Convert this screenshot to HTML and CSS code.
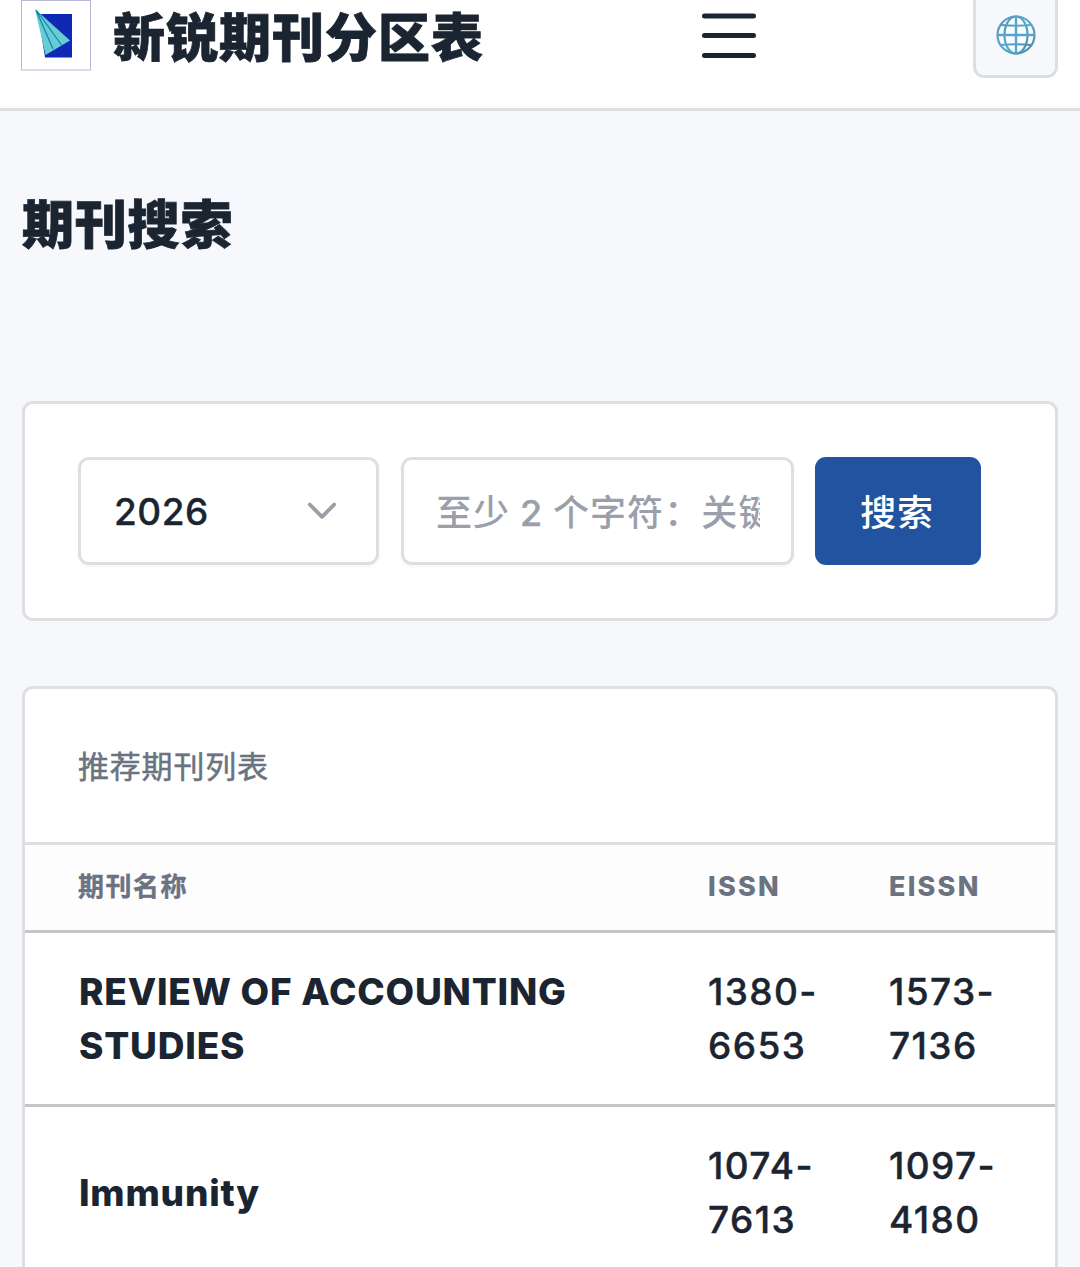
FILE: index.html
```html
<!DOCTYPE html>
<html lang="zh-CN">
<head>
<meta charset="utf-8">
<title>新锐期刊分区表</title>
<link rel="stylesheet" href="styles.css">
</head>
<body>
<header class="topbar">
  <a class="brand">
    <svg class="logo" viewBox="0 0 70 71">
      <rect x=".5" y=".5" width="69" height="69.5" fill="#fff" stroke="#b6bad4"/>
      <path d="M17 14H51V57.500H24z" fill="#1029b4"/>
      <path d="M14 9L49 40.500L24.500 55z" fill="#66cdd5"/>
      <path d="M15 10L32 49M16 11L40.500 45" stroke="#167fa6" stroke-width="1.200" fill="none"/>
    </svg>
    <span class="site-name">新锐期刊分区表</span>
  </a>
  <svg class="menu" viewBox="0 0 54 50"><path d="M2.500 4.900H51.500M2.500 24.600H51.500M2.500 44.400H51.500" stroke="#1b2431" stroke-width="5" stroke-linecap="round"/></svg>
  <button class="lang" aria-label="语言">
    <svg class="globe" viewBox="0 0 40 40">
      <defs><linearGradient id="g" x1="0" y1="0" x2="1" y2="1"><stop offset="0" stop-color="#5798b4"/><stop offset=".5" stop-color="#58a9d2"/><stop offset="1" stop-color="#508ba6"/></linearGradient></defs>
      <circle cx="20" cy="20" r="18.500" fill="#fbfdff"/>
      <g fill="none" stroke="url(#g)" stroke-width="2.200">
        <circle cx="20" cy="20" r="18.500"/>
        <ellipse cx="20" cy="20" rx="11.500" ry="18.500"/>
        <path d="M5 10Q20 11.500 35 10M5 30Q20 28.500 35 30"/>
      </g>
      <path d="M20 1.500V38.500M1.500 20H38.500" stroke="#56a5cc" stroke-width="2.400"/>
    </svg>
  </button>
</header>
<main class="content">
  <h1 class="page-title">期刊搜索</h1>
  <form class="card search">
    <div class="field select"><span>2026</span>
      <svg class="chevron" viewBox="0 0 30 18"><path d="M2.800 2.500L15 14.800L27.200 2.500" fill="none" stroke="#9a9ea6" stroke-width="3.800" stroke-linecap="round" stroke-linejoin="round"/></svg>
    </div>
    <div class="field query"><span class="placeholder">至少 <b>2</b> 个字符：关键</span></div>
    <button class="submit" type="button">搜索</button>
  </form>
  <section class="card results">
    <div class="list-title">推荐期刊列表</div>
    <div class="row head"><span>期刊名称</span><span class="latin">ISSN</span><span class="latin">EISSN</span></div>
    <div class="row"><strong>REVIEW OF ACCOUNTING<br>STUDIES</strong><span>1380-<br>6653</span><span>1573-<br>7136</span></div>
    <div class="row"><strong>Immunity</strong><span>1074-<br>7613</span><span>1097-<br>4180</span></div>
  </section>
</main>
</body>
</html>
```

FILE: styles.css
```css
* { box-sizing: border-box; }
html, body { height: 1267px; overflow: hidden; }
body {
  margin: 0;
  background: #f6f8fc;
  color: #1b2431;
  font-family: Inter, "Noto Sans CJK SC", sans-serif;
  font-size: 37px;
  font-weight: 500;
}
button { font: inherit; padding: 0; }
.topbar {
  display: flex;
  align-items: flex-start;
  height: 111px;
  padding: 0 22px 0 21px;
  background: #fff;
  border-bottom: 3px solid #dddfe1;
}
.brand { display: flex; gap: 22px; width: 681px; }
.logo { width: 70px; height: 71px; flex: none; }
.site-name {
  font-size: 52px;
  font-weight: 800;
  line-height: 77px;
  letter-spacing: 1px;
  white-space: nowrap;
  -webkit-text-stroke: .8px;
}
.menu { width: 54px; height: 50px; margin-top: 11px; }
.lang {
  display: flex;
  justify-content: center;
  width: 85px;
  height: 88px;
  margin: -10px 0 0 auto;
  padding-top: 22px;
  border: 3px solid #dcdee1;
  border-radius: 11px;
  background: #f6f8fc;
}
.globe { width: 40px; height: 40px; }
.content { padding: 76px 22px 0; }
.page-title {
  margin: 0;
  height: 215px;
  font-size: 52px;
  font-weight: 800;
  line-height: 78px;
  letter-spacing: .8px;
  -webkit-text-stroke: .8px;
}
.card { background: #fff; border: 3px solid #dddfe2; border-radius: 11px; }
.search {
  display: flex;
  gap: 22px;
  height: 220px;
  margin: -1px 0 65px;
  padding: 53px;
}
.field {
  display: flex;
  align-items: center;
  height: 108px;
  border: 3px solid #dddfe2;
  border-radius: 11px;
  background: #fff;
  box-shadow: 0 2px 3px rgba(0, 0, 0, .04);
}
.select { width: 301px; padding: 0 39px 0 33px; justify-content: space-between; letter-spacing: .5px; -webkit-text-stroke: .3px; }
.chevron { width: 30px; height: 18px; }
.query { width: 393px; margin-right: -1px; padding: 0 31px 0 32px; }
.placeholder {
  flex: 1;
  min-width: 0;
  margin-top: -3px;
  overflow: hidden;
  white-space: nowrap;
  color: #9a9faa;
  font-size: 36px;
  letter-spacing: 1.1px;
}
.placeholder b { font-weight: 500; margin: 0 -1px; -webkit-text-stroke: .4px; }
.submit {
  width: 166px;
  height: 108px;
  padding: 0 2px 3px 0;
  border: 0;
  border-radius: 11px;
  background: #2153a0;
  color: #fff;
  font-size: 36px;
  letter-spacing: .7px;
}
.results { height: 640px; overflow: hidden; }
.list-title {
  height: 156px;
  padding: 0 53px;
  border-bottom: 3px solid #dddfe2;
  color: #6b7280;
  font-size: 31px;
  font-weight: 400;
  line-height: 155px;
  letter-spacing: .8px;
  -webkit-text-stroke: .5px;
}
.row {
  display: grid;
  grid-template-columns: 629px 181px 1fr;
  align-items: center;
  height: 174px;
  padding-left: 54px;
  border-bottom: 3px solid #c3c6c9;
  line-height: 54px;
  letter-spacing: 1.4px;
}
.row > span { -webkit-text-stroke: .4px; }
.row strong { font-weight: 800; letter-spacing: .8px; }
.head {
  height: 88px;
  padding-left: 53px;
  padding-bottom: 1px;
  background: #fdfdfe;
  color: #6b7280;
  font-size: 26px;
  font-weight: 700;
  letter-spacing: 1.5px;
}
.head .latin { padding-left: 1px; font-size: 27px; font-weight: 800; letter-spacing: 2.2px; -webkit-text-stroke: 0; }
```
